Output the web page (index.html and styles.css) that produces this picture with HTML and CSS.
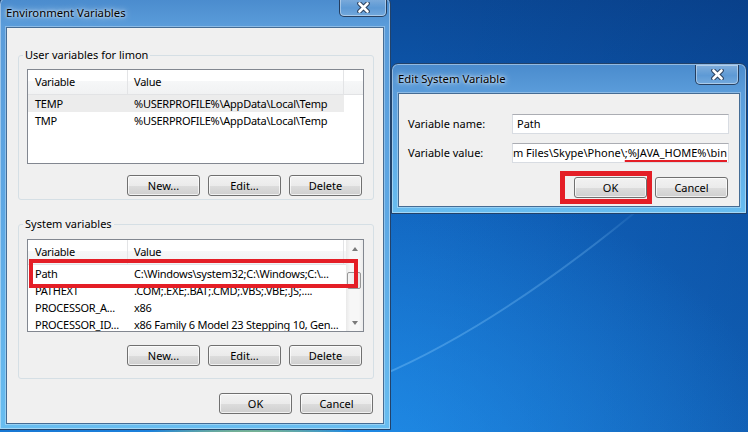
FILE: index.html
```html
<!DOCTYPE html>
<html lang="en">
<head>
  <meta charset="UTF-8">
  <meta name="viewport" content="width=device-width, initial-scale=1.0">
  <title>Environment Variables</title>
  <link rel="stylesheet" href="styles.css">
</head>
<body>
  <div class="desktop">
    <!-- faint light streak across the wallpaper -->
    <svg class="streak" width="748" height="432" viewBox="0 0 748 432">
      <defs>
        <linearGradient id="streak-fade" x1="0" y1="0" x2="1" y2="0">
          <stop offset="0" stop-color="#8fd0ff" stop-opacity="0.35"/>
          <stop offset="0.8" stop-color="#8fd0ff" stop-opacity="0.25"/>
          <stop offset="1" stop-color="#8fd0ff" stop-opacity="0"/>
        </linearGradient>
      </defs>
      <path d="M380 376 Q 500 325 650 200" fill="none" stroke="url(#streak-fade)" stroke-width="2"/>
    </svg>

    <div class="window env-window">
      <div class="titlebar">
        <span class="caption">Environment Variables</span>
      </div>
      <button class="close-btn env-close" aria-label="Close">
        <svg width="13" height="11" viewBox="0 0 13 11">
          <path d="M2.5 1.5 L10.5 9.5 M10.5 1.5 L2.5 9.5" stroke="#2a3f5c" stroke-width="4.6" stroke-linecap="round"/>
          <path d="M2.5 1.5 L10.5 9.5 M10.5 1.5 L2.5 9.5" stroke="#fff" stroke-width="2.6" stroke-linecap="round"/>
        </svg>
      </button>

      <div class="client env-client">
        <fieldset class="group user-group">
          <legend>User variables for limon</legend>
          <div class="list user-list">
            <div class="list-cols">
              <div class="list-header">
                <span class="cell col-name">Variable</span>
                <span class="cell col-value">Value</span>
              </div>
              <div class="list-row selected">
                <span class="cell col-name">TEMP</span>
                <span class="cell col-value">%USERPROFILE%\AppData\Local\Temp</span>
              </div>
              <div class="list-row">
                <span class="cell col-name">TMP</span>
                <span class="cell col-value">%USERPROFILE%\AppData\Local\Temp</span>
              </div>
            </div>
          </div>
          <div class="button-row">
            <button class="btn">New...</button>
            <button class="btn">Edit...</button>
            <button class="btn">Delete</button>
          </div>
        </fieldset>

        <fieldset class="group system-group">
          <legend>System variables</legend>
          <div class="list system-list">
            <div class="list-cols">
              <div class="list-header">
                <span class="cell col-name">Variable</span>
                <span class="cell col-value">Value</span>
              </div>
              <div class="list-row">
                <span class="cell col-name">Path</span>
                <span class="cell col-value">C:\Windows\system32;C:\Windows;C:\...</span>
              </div>
              <div class="list-row">
                <span class="cell col-name">PATHEXT</span>
                <span class="cell col-value">.COM;.EXE;.BAT;.CMD;.VBS;.VBE;.JS;....</span>
              </div>
              <div class="list-row">
                <span class="cell col-name">PROCESSOR_A...</span>
                <span class="cell col-value">x86</span>
              </div>
              <div class="list-row">
                <span class="cell col-name">PROCESSOR_ID...</span>
                <span class="cell col-value">x86 Family 6 Model 23 Stepping 10, Gen...</span>
              </div>
            </div>
            <div class="scrollbar">
              <div class="arrow arrow-up"></div>
              <div class="track"><div class="thumb"></div></div>
              <div class="arrow arrow-down"></div>
            </div>
            <div class="marker path-marker"></div>
          </div>
          <div class="button-row">
            <button class="btn">New...</button>
            <button class="btn">Edit...</button>
            <button class="btn">Delete</button>
          </div>
        </fieldset>

        <div class="dialog-buttons">
          <button class="btn">OK</button>
          <button class="btn">Cancel</button>
        </div>
      </div>
    </div>

    <div class="window edit-window">
      <div class="titlebar">
        <span class="caption">Edit System Variable</span>
      </div>
      <button class="close-btn edit-close" aria-label="Close">
        <svg width="13" height="11" viewBox="0 0 13 11">
          <path d="M2.5 1.5 L10.5 9.5 M10.5 1.5 L2.5 9.5" stroke="#2a3f5c" stroke-width="4.6" stroke-linecap="round"/>
          <path d="M2.5 1.5 L10.5 9.5 M10.5 1.5 L2.5 9.5" stroke="#fff" stroke-width="2.6" stroke-linecap="round"/>
        </svg>
      </button>

      <div class="client edit-client">
        <div class="form-row">
          <label class="form-label">Variable name:</label>
          <div class="field">Path</div>
        </div>
        <div class="form-row">
          <label class="form-label">Variable value:</label>
          <div class="field field-end">
            <span class="field-text">m Files\Skype\Phone\<span class="underlined">;%JAVA_HOME%\bin</span></span>
          </div>
        </div>
        <div class="dialog-buttons edit-buttons">
          <button class="btn">OK</button>
          <button class="btn">Cancel</button>
        </div>
        <div class="marker ok-marker"></div>
      </div>
    </div>
  </div>
</body>
</html>
```

FILE: styles.css
```css
* {
  box-sizing: border-box;
}
body {
  margin: 0;
  font-family: "Noto Sans", "Open Sans", sans-serif;
  font-size: 11px;
  line-height: 14px;
  color: #000;
  background: #0d5cb6;
}

/* wallpaper */
.desktop {
  position: relative;
  width: 748px;
  height: 432px;
  overflow: hidden;
  background:
    radial-gradient(ellipse 120px 24px at 250px 444px, #d6e040, rgba(120, 200, 80, 0) 100%),
    radial-gradient(ellipse 460px 320px at 330px 480px, rgba(40, 160, 250, 0.6), rgba(40, 160, 250, 0) 100%),
    linear-gradient(90deg, rgba(0, 0, 0, 0) 55%, rgba(0, 30, 90, 0.22) 100%),
    linear-gradient(180deg, #0b4a98 0%, #0f5fb8 35%, #1570cc 100%);
}
.streak {
  position: absolute;
  left: 0;
  top: 0;
  pointer-events: none;
}

/* aero window frame */
.window {
  position: absolute;
  display: flex;
  flex-direction: column;
  padding: 0 6px 5px;
  border: 1px solid #22426a;
  border-radius: 7px 7px 0 0;
  background: linear-gradient(180deg, #4a8bcd 0px, #5a9cda 28px, #5ea8e4 50%, #68bdf0 100%);
  box-shadow: inset 0 0 0 1px rgba(255, 255, 255, 0.4);
}
.env-window {
  left: -1px;
  top: -3px;
  width: 392px;
  height: 433px;
}
.edit-window {
  left: 391px;
  top: 63px;
  width: 356px;
  height: 151px;
  padding-bottom: 6px;
}
.titlebar {
  flex: none;
  height: 29px;
  display: flex;
  align-items: center;
  padding-top: 1px;
}
.caption {
  font-size: 11.3px;
  text-shadow: 0 0 7px #fff, 0 0 3px rgba(255, 255, 255, 0.9);
}
.close-btn {
  position: absolute;
  display: flex;
  align-items: center;
  justify-content: center;
  padding: 0;
  height: 20px;
  border: 1px solid rgba(25, 45, 75, 0.85);
  border-top: none;
  border-radius: 0 0 5px 5px;
  background: linear-gradient(180deg, rgba(255, 255, 255, 0.3), rgba(255, 255, 255, 0.08) 55%, rgba(255, 255, 255, 0.18));
  box-shadow: inset 0 0 0 1px rgba(255, 255, 255, 0.4);
}
.env-close {
  top: 0;
  right: 3px;
  width: 48px;
  height: 19px;
}
.edit-close {
  top: 1px;
  right: 7px;
  width: 44px;
}

.client {
  position: relative;
  flex: 1;
  background: #f0f0f0;
  border: 1px solid #456c94;
  box-shadow: 0 0 0 1px rgba(255, 255, 255, 0.3);
}
.env-client {
  padding: 0 10px 0 11px;
}

/* group boxes */
.group {
  margin: 0;
  width: 356px;
  padding: 7px 9px 3px 8px;
  border: 1px solid #d5dfe5;
  border-radius: 3px;
  min-inline-size: 0;
}
.group legend {
  padding: 0 2px;
  margin-left: -4px;
  line-height: 14px;
}
.user-group {
  margin-top: 20px;
}
.system-group {
  margin-top: 17px;
  padding-top: 8px;
  padding-bottom: 12px;
}

/* list views */
.list {
  position: relative;
  display: flex;
  width: 337px;
  background: #fff;
  border: 1px solid #828790;
  overflow: hidden;
}
.user-list {
  height: 95px;
}
.system-list {
  height: 93px;
}
.list-cols {
  flex: 1;
  min-width: 0;
}
.list-header {
  display: flex;
  height: 25px;
  background: linear-gradient(180deg, #fff 0%, #fff 45%, #f6f7f8 45%, #f1f2f3 100%);
  border-bottom: 1px solid #e2e3e5;
}
.list-header .cell {
  border-right: 1px solid #e3e4e6;
}
.cell {
  display: flex;
  align-items: center;
  white-space: nowrap;
  overflow: hidden;
  letter-spacing: -0.25px;
}
.col-name {
  width: 100px;
  padding-left: 7px;
}
.col-value {
  width: 216px;
  padding-left: 6px;
}
.list-row {
  display: flex;
  width: 316px;
  height: 17px;
}
.list-row.selected {
  background: #ececec;
}

.scrollbar {
  flex: none;
  width: 17px;
  display: flex;
  flex-direction: column;
  background: linear-gradient(90deg, #e9e9e9, #f7f7f7 25%, #f7f7f7 75%, #ececec);
}
.arrow {
  flex: none;
  height: 17px;
  display: flex;
  align-items: center;
  justify-content: center;
}
.arrow::before {
  content: "";
  border-left: 3.5px solid transparent;
  border-right: 3.5px solid transparent;
}
.arrow-up::before {
  border-bottom: 4px solid #7a7a7a;
}
.arrow-down::before {
  border-top: 4px solid #7a7a7a;
}
.track {
  flex: 1;
}
.thumb {
  margin: 15px 2px 0 1px;
  height: 17px;
  border: 1px solid #979797;
  border-radius: 2px;
  background: linear-gradient(90deg, #f4f4f4, #e6e6e6);
}

.button-row {
  display: flex;
  justify-content: flex-end;
  gap: 8px;
  margin: 11px 2px 0 0;
}
.system-group .button-row {
  margin-top: 13px;
}
.btn {
  width: 73px;
  height: 21px;
  padding: 0;
  font: inherit;
  color: #000;
  border: 1px solid #707070;
  border-radius: 3px;
  background: linear-gradient(180deg, #f2f2f2 0%, #ebebeb 50%, #dddddd 51%, #cfcfcf 100%);
  box-shadow: inset 0 0 0 1px rgba(255, 255, 255, 0.7);
}
.dialog-buttons {
  display: flex;
  justify-content: flex-end;
  gap: 8px;
  margin-top: 14px;
}

/* edit dialog */
.edit-client {
  padding: 20px 10px 0 9px;
}
.form-row {
  display: flex;
  align-items: center;
  height: 20px;
  margin-bottom: 9px;
}
.form-label {
  width: 104px;
}
.field {
  display: flex;
  align-items: center;
  width: 217px;
  height: 20px;
  padding: 0 4px;
  background: #fff;
  border: 1px solid #d8dce2;
  border-top-color: #abadb3;
  white-space: nowrap;
  overflow: hidden;
}
.field-end {
  justify-content: flex-end;
  padding: 0 1px 0 0;
}
.field-text {
  flex: none;
}
.underlined {
  text-decoration: underline 3px #e41e26;
  text-underline-offset: 3px;
  text-decoration-skip-ink: none;
}
/* sibling margins collapse with the row above, so this sets the full gap */
.edit-buttons {
  margin: 14px 1px 0 0;
}

/* red annotation boxes */
.marker {
  position: absolute;
  border: 4px solid #e41e26;
  pointer-events: none;
}
.path-marker {
  left: 1px;
  top: 19px;
  width: 329px;
  height: 29px;
}
.ok-marker {
  left: 161px;
  top: 77px;
  width: 92px;
  height: 33px;
  border-width: 5px;
}
```
